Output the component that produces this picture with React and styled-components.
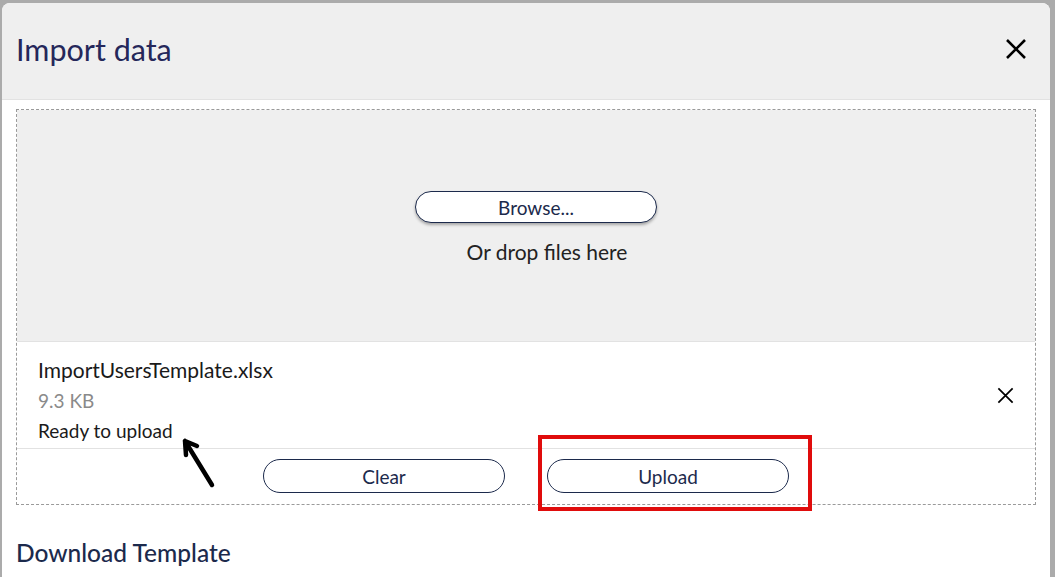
import styled, { createGlobalStyle } from 'styled-components'

const GlobalStyle = createGlobalStyle`
    html, body {
        margin: 0;
        padding: 0;
    }
    body {
        font-family: Lato, "Open Sans", sans-serif;
        background: #ababab;
    }
`

const COLORS = {
    navy: '#1c2a4c',
    title: '#25275a',
    headerBG: '#efefef',
    line: '#e2e2e2',
    dash: '#9a9a9a',
}

export default function App() {
    return (
        <Backdrop>
            <GlobalStyle />
            <Modal>
                <Header>
                    <Title>Import data</Title>
                    <IconButton aria-label="Close">
                        <CrossIcon size={24} stroke={2.6} />
                    </IconButton>
                </Header>

                <Body>
                    <DropZone>
                        <DropArea>
                            <PillButton $width={242} $height={32} $shadow $offset={22}>Browse...</PillButton>
                            <DropHint>Or drop files here</DropHint>
                        </DropArea>

                        <FileRow>
                            <FileInfo>
                                <FileName>ImportUsersTemplate.xlsx</FileName>
                                <FileSize>9.3 KB</FileSize>
                                <FileStatus>Ready to upload</FileStatus>
                            </FileInfo>
                            <IconButton aria-label="Remove file">
                                <CrossIcon size={19} stroke={2.2} />
                            </IconButton>
                        </FileRow>

                        <Actions>
                            <PillButton $width={242} $height={34}>Clear</PillButton>
                            <PillButton $width={242} $height={34}>Upload</PillButton>
                        </Actions>
                    </DropZone>

                    <SectionTitle>Download Template</SectionTitle>
                </Body>

                <Highlight />
                <Arrow width="40" height="56" viewBox="0 0 40 56">
                    <path d="M32 50 L5 6 M5 6 L6 20 M5 6 L17 11" />
                </Arrow>
            </Modal>
        </Backdrop>
    )
}

function CrossIcon({ size, stroke }) {
    return (
        <svg width={size} height={size} viewBox="0 0 24 24" fill="none" stroke="#000" strokeWidth={stroke}>
            <path d="M3 3 L21 21 M21 3 L3 21" />
        </svg>
    )
}

const Backdrop = styled.div`
    height: 577px;
    overflow: hidden;
    padding: 3px 5px 0 2px;
    box-sizing: border-box;
`

const Modal = styled.div`
    position: relative;
    background: #fff;
    border-radius: 8px 8px 0 0;
    height: 100%;
    overflow: hidden;
`

const Header = styled.div`
    display: flex;
    align-items: center;
    justify-content: space-between;
    height: 97px;
    padding: 0 22px 5px 14px;
    box-sizing: border-box;
    background: ${COLORS.headerBG};
    border-bottom: 1px solid ${COLORS.line};
`

const Title = styled.h1`
    margin: 0;
    font-size: 30.5px;
    font-weight: 400;
    color: ${COLORS.title};
`

const IconButton = styled.button`
    display: flex;
    align-items: center;
    justify-content: center;
    padding: 0;
    border: none;
    background: none;
    cursor: pointer;
`

const Body = styled.div`
    padding: 9px 14px 0;
`

const DropZone = styled.div`
    border: 1px dashed ${COLORS.dash};
`

const DropArea = styled.div`
    display: flex;
    flex-direction: column;
    align-items: center;
    justify-content: center;
    gap: 16px;
    height: 231px;
    padding: 4px 0 0 42px;
    box-sizing: border-box;
    background: ${COLORS.headerBG};
`

const PillButton = styled.button`
    width: ${props => props.$width}px;
    height: ${props => props.$height}px;
    margin-right: ${props => props.$offset || 0}px;
    border: 1px solid ${COLORS.navy};
    border-radius: 999px;
    background: #fff;
    color: ${COLORS.navy};
    font-family: Lato, sans-serif;
    font-size: 19px;
    cursor: pointer;
    box-shadow: ${props => props.$shadow ? '0 2px 3px rgba(0,0,0,0.3)' : 'none'};
`

const DropHint = styled.div`
    font-size: 21px;
    color: #222;
`

const FileRow = styled.div`
    display: flex;
    align-items: center;
    justify-content: space-between;
    height: 106px;
    padding: 0 20px 0 21px;
    border-top: 1px solid ${COLORS.line};
`

const FileInfo = styled.div`
    display: flex;
    flex-direction: column;
    gap: 7px;
    padding-top: 9px;
`

const FileName = styled.div`
    font-size: 21px;
    color: #1a1a1a;
`

const FileSize = styled.div`
    font-size: 19px;
    color: #8a8a8a;
`

const FileStatus = styled.div`
    font-size: 19px;
    color: #1a1a1a;
`

const Actions = styled.div`
    display: flex;
    justify-content: center;
    gap: 42px;
    padding: 10px 0 11px;
    border-top: 1px solid ${COLORS.line};
`

const SectionTitle = styled.h2`
    margin: 33px 0 0;
    font-size: 24.5px;
    font-weight: 500;
    color: ${COLORS.navy};
`

const Highlight = styled.div`
    position: absolute;
    left: 536px;
    top: 432px;
    width: 274px;
    height: 76px;
    border: 4px solid #e00c0c;
    box-sizing: border-box;
`

const Arrow = styled.svg`
    position: absolute;
    left: 178px;
    top: 432px;
    fill: none;
    stroke: #000;
    stroke-width: 4.5;
    stroke-linecap: round;
    stroke-linejoin: round;
`
